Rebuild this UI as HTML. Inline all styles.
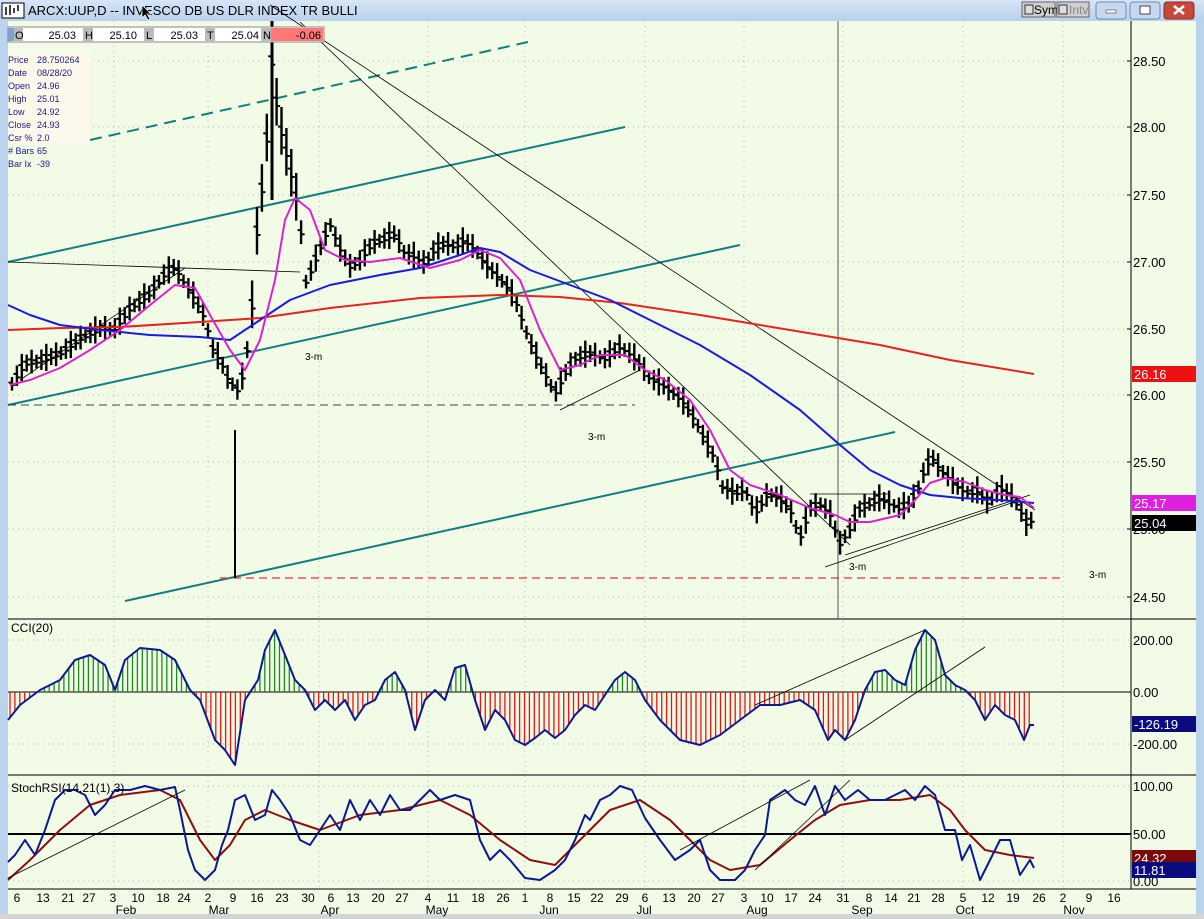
<!DOCTYPE html>
<html><head><meta charset="utf-8"><style>
html,body{margin:0;padding:0;width:1204px;height:919px;overflow:hidden;background:#f2fbe6;font-family:"Liberation Sans",sans-serif}
svg{position:absolute;left:0;top:0}
</style></head><body>
<svg id="s" width="1204" height="919" xmlns="http://www.w3.org/2000/svg" font-family="Liberation Sans, sans-serif">
<defs><linearGradient id="tb" x1="0" y1="0" x2="0" y2="1"><stop offset="0" stop-color="#d7e6f7"/><stop offset="1" stop-color="#b9d1ec"/></linearGradient></defs>
<rect x="0" y="0" width="1204" height="919" fill="#bcd3ee"/>
<rect x="0" y="0" width="1204" height="21" fill="url(#tb)"/>
<rect x="8" y="21" width="1188" height="894" fill="#f2fbe6"/>
<rect x="0" y="914" width="1204" height="5" fill="#d4d4d4"/>
<rect x="2" y="3" width="22" height="15" fill="#fff" stroke="#000"/>
<path d="M6 15V7M10 15V5M14 13V8M18 11V5" stroke="#000" stroke-width="1.5"/>
<text x="28" y="15" font-size="13" fill="#000">ARCX:UUP,D -- INVESCO DB US DLR INDEX TR BULLI</text>
<path d="M142 5l0 13 3-3 3 5 2-1-3-5 4 0z" fill="#000" stroke="#fff" stroke-width=".7"/>
<rect x="1022" y="2" width="33" height="15" fill="#d0d0d0" stroke="#666"/><text x="1034" y="14" font-size="12">Sym</text><rect x="1025" y="5" width="8" height="9" fill="#ddd" stroke="#333"/>
<rect x="1057" y="2" width="32" height="15" fill="#d0d0d0" stroke="#666"/><text x="1069" y="14" font-size="12" fill="#888">Intv</text><rect x="1059" y="5" width="8" height="9" fill="#ddd" stroke="#333"/>
<rect x="1096" y="2" width="30" height="17" rx="3" fill="#c6d8ef" stroke="#6f8bb0"/><rect x="1106" y="10" width="10" height="3" fill="#fff" stroke="#444" stroke-width=".6"/>
<rect x="1130" y="2" width="30" height="17" rx="3" fill="#c6d8ef" stroke="#6f8bb0"/><rect x="1140" y="6" width="10" height="8" fill="#fff" stroke="#444"/>
<rect x="1164" y="2" width="30" height="17" rx="3" fill="#c9463a" stroke="#8a2a22"/><path d="M1174 6l10 8M1184 6l-10 8" stroke="#fff" stroke-width="2.5"/>
<g id="g"></g>
</svg>
<script>
var g=document.getElementById('g'),h='';
function L(x1,y1,x2,y2,c,w,d){h+='<line x1="'+x1+'" y1="'+y1+'" x2="'+x2+'" y2="'+y2+'" stroke="'+c+'" stroke-width="'+(w||1)+'"'+(d?' stroke-dasharray="'+d+'"':'')+'/>';}
function P(pts,c,w){h+='<polyline fill="none" stroke="'+c+'" stroke-width="'+(w||1)+'" stroke-linejoin="round" points="'+pts.map(function(p){return p.join(',')}).join(' ')+'"/>';}
function T(x,y,t,s,c,a){h+='<text x="'+x+'" y="'+y+'" font-size="'+(s||12)+'" fill="'+(c||'#000')+'"'+(a?' text-anchor="'+a+'"':'')+'>'+t+'</text>';}
function interp(pts,x){for(var i=0;i<pts.length-1;i++){if(x>=pts[i][0]&&x<=pts[i+1][0]){var t=(x-pts[i][0])/(pts[i+1][0]-pts[i][0]);return pts[i][1]+t*(pts[i+1][1]-pts[i][1]);}}return pts[pts.length-1][1];}
var gx=[114,208,319,428,525,645,744,843,963,1063];
gx.forEach(function(x){L(x,21,x,889,'#b8b8b8',1,'1,4');});
[61,127,195,262,329,395,462,529,597,640,744,786,881].forEach(function(y){L(8,y,1131,y,'#b8b8b8',1,'1,4');});
L(8,619,1196,619,'#777',2);L(8,775,1196,775,'#777',2);L(1131,21,1131,889,'#000',1);L(8,889,1196,889,'#000',1);
L(8,692,1131,692,'#000',1);L(8,834,1131,834,'#000',2);
[['28.50',61],['28.00',127],['27.50',195],['27.00',262],['26.50',329],['26.00',395],['25.50',462],['25.00',529],['24.50',597]].forEach(function(a){L(1127,a[1],1131,a[1],'#000');T(1133,a[1]+5,a[0],13);});
[['200.00',640],['0.00',692],['-200.00',744]].forEach(function(a){T(1133,a[1]+5,a[0],13);});
[['100.00',786],['50.00',834],['0.00',881]].forEach(function(a){T(1133,a[1]+5,a[0],13);});
L(8,405,740,245,'#0f7f80',2);L(8,262,625,127,'#0f7f80',2);L(125,601,895,432,'#0f7f80',2);L(90,140,528,42,'#0f7f80',2,'12,7');
L(8,405,635,405,'#345',1,'8,5');L(220,578,1065,578,'#e33',1.3,'8,5');
L(270,5,1035,510,'#000',.8);L(300,22,850,545,'#000',.8);L(8,262,300,272,'#000',.8);
L(838,21,838,619,'#555',1);L(825,567,1020,500,'#000',.8);L(845,555,1030,495,'#000',.8);L(810,494,890,494,'#000',.8);
L(20,380,185,268,'#000',.8);L(560,410,640,370,'#000',.8);
var pr=[[12,385],[25,365],[40,362],[60,355],[80,340],[100,330],[115,330],[130,310],[150,295],[165,275],[175,268],[185,285],[195,300],[205,320],[213,350],[222,365],[228,380],[238,392],[245,370],[252,310],[258,220],[265,170],[272,60],[278,120],[285,150],[292,180],[300,220],[305,285],[312,270],[320,250],[330,225],[340,250],[350,268],[360,262],[372,245],[385,240],[395,235],[405,255],[415,258],[425,265],[435,250],[445,245],[455,248],[465,242],[475,250],[485,265],[495,275],[505,285],[515,300],[525,330],[535,355],[545,375],[555,395],[565,375],[575,360],[590,355],[605,360],[620,348],[630,355],[640,365],[650,380],[660,385],[672,393],[685,405],[697,425],[707,445],[715,460],[722,488],[735,495],[745,490],[755,515],[768,495],[780,500],[790,510],[800,540],[810,510],[820,505],[830,515],[840,545],[850,530],[860,510],[870,505],[880,500],[890,505],[900,510],[910,505],[918,490],[925,470],[932,458],[940,470],[950,480],[960,490],[970,495],[978,492],[988,505],[1000,490],[1010,495],[1020,510],[1026,525],[1034,520]];
for(var x=12,i=0;x<=1034;x+=4.9,i++){var c=interp(pr,x),r=8+(i*7%5)*2;if(x>250&&x<300)r=28;L(x,c-r,x,c+r*0.7,'#000',2.4);L(x,c,x+3.5,c,'#000',2);L(x-3.5,c-r*0.3,x,c-r*0.3,'#000',2);}
L(272,21,272,200,'#000',3);L(235,430,235,578,'#000',2);
P([[8,330],[60,328],[120,327],[200,322],[260,318],[330,308],[420,298],[500,295],[560,297],[620,303],[700,315],[760,325],[820,335],[880,345],[950,360],[1034,374]],'#e8221c',2);
P([[8,305],[30,315],[60,325],[100,330],[150,335],[200,337],[230,340],[260,320],[290,300],[330,285],[380,275],[420,268],[460,255],[480,248],[500,252],[530,270],[570,285],[610,300],[650,320],[700,345],[750,375],[800,410],[840,445],[870,470],[900,485],[930,495],[960,498],[1000,500],[1034,503]],'#1a1ae0',2);
P([[10,385],[30,380],[60,368],[90,350],[120,330],[150,305],[175,285],[195,288],[210,315],[230,350],[245,370],[260,340],[275,280],[285,220],[295,198],[310,210],[325,250],[345,260],[370,262],[400,258],[430,268],[460,260],[480,250],[500,258],[520,280],[540,330],[560,370],[580,365],[600,355],[625,355],[645,370],[665,380],[690,400],[710,430],[730,470],[750,485],[780,495],[810,508],[835,515],[850,522],[870,522],[900,515],[915,500],[930,483],[945,478],[965,482],[985,490],[1005,495],[1020,497],[1034,508]],'#e020d0',2);
T(305,360,'3-m',10);T(588,440,'3-m',10);T(849,570,'3-m',10);T(1089,578,'3-m',10);
var cc=[[8,720],[20,705],[40,690],[60,680],[75,660],[90,655],[105,665],[115,690],[125,660],[140,648],[160,650],[175,660],[190,690],[200,700],[215,740],[225,750],[235,765],[245,700],[258,680],[265,650],[275,630],[285,655],[295,680],[305,690],[315,710],[325,700],[335,710],[345,700],[355,720],[365,705],[375,700],[385,680],[395,672],[405,690],[415,730],[425,700],[435,690],[445,700],[455,668],[465,665],[475,700],[485,730],[495,710],[505,720],[515,740],[525,745],[535,738],[545,730],[555,738],[565,730],[575,715],[585,705],[595,710],[605,695],[615,680],[625,672],[635,680],[645,700],[660,720],[680,740],[700,745],[720,735],[740,720],[760,705],[780,705],[800,700],[815,710],[828,740],[835,730],[845,740],[855,720],[865,690],[875,672],[885,670],[895,680],[905,685],[915,650],[925,630],[935,640],[945,675],[955,685],[965,690],[975,700],[985,720],[995,705],[1005,715],[1015,720],[1024,740],[1030,725],[1034,725]];
for(var x=10;x<=1034;x+=4.9){var v=interp(cc,x);L(x,692,x,v,v<692?'#1a8a1a':'#ee1111',1.3);}
P(cc,'#0b1a90',2);
L(755,705,925,630,'#000',.8);L(845,740,985,647,'#000',.8);
T(11,632,'CCI(20)',12);
P([[8,880],[30,860],[60,830],[90,805],[120,795],[160,790],[180,800],[200,840],[215,860],[230,845],[245,820],[265,810],[290,820],[320,830],[360,815],[400,810],[440,800],[470,815],[500,840],[530,860],[555,865],[580,840],[610,810],[640,800],[670,820],[690,840],[710,860],[730,870],[760,865],[790,840],[815,820],[840,805],[870,800],[900,800],[930,795],[950,810],[965,830],[985,850],[1010,855],[1034,858]],'#8b1010',2);
P([[8,862],[15,855],[25,840],[35,855],[45,830],[55,800],[65,790],[75,790],[85,795],[95,815],[105,805],[115,790],[130,790],[145,786],[160,790],[175,787],[180,810],[188,850],[195,870],[205,880],[215,870],[222,845],[228,830],[235,800],[245,795],[255,820],[265,815],[272,790],[280,800],[290,815],[300,840],[310,845],[320,830],[330,815],[340,830],[350,800],[360,820],[370,800],[380,815],[390,795],[400,810],[410,810],[420,800],[430,790],[440,800],[455,795],[470,800],[480,840],[490,860],[500,850],[510,860],[525,878],[540,880],[555,870],[565,860],[575,840],[585,815],[590,820],[600,800],[610,795],[620,786],[632,790],[645,818],[660,840],[675,860],[690,850],[700,840],[710,870],[720,880],[735,880],[745,870],[755,850],[765,835],[770,800],[785,790],[795,800],[805,805],[815,786],[825,815],[835,786],[845,800],[858,790],[870,800],[885,800],[895,795],[905,790],[915,800],[925,786],[935,795],[945,830],[955,830],[962,860],[970,845],[980,880],[990,860],[1000,840],[1010,840],[1020,875],[1030,860],[1034,868]],'#0b1a90',2);
L(8,878,185,790,'#000',.8);L(680,850,810,780,'#000',.8);L(755,870,850,780,'#000',.8);
T(11,792,'StochRSI(14,21(1),3)',12);
var d=[['6',17],['13',43],['21',68],['27',89],['3',113],['10',138],['18',163],['24',184],['2',208],['9',233],['16',257],['23',282],['30',308],['6',331],['13',353],['20',378],['27',402],['4',428],['11',453],['18',478],['26',503],['1',525],['8',550],['15',574],['22',597],['29',622],['6',645],['13',669],['20',694],['27',718],['3',744],['10',767],['17',791],['24',815],['31',843],['8',869],['14',891],['21',914],['28',938],['5',963],['12',988],['19',1013],['26',1039],['2',1063],['9',1089],['16',1114]];
d.forEach(function(a){T(a[1],902,a[0],12,'#000','middle');});
[['Feb',126],['Mar',219],['Apr',330],['May',437],['Jun',549],['Jul',644],['Aug',757],['Sep',862],['Oct',965],['Nov',1074]].forEach(function(a){T(a[1],914,a[0],12,'#000','middle');});
function B(y,c,t,fc){h+='<rect x="1132" y="'+y+'" width="64" height="16" fill="'+c+'"/>';T(1134,y+13,t,13,fc||'#fff');}
B(366,'#ee1111','26.16');B(495,'#e020e0','25.17');B(515,'#000','25.04');B(716,'#0b0b80','-126.19');B(850,'#7a0a0a','24.32');B(862,'#0b0b80','11.81');
h+='<rect x="8" y="27" width="316" height="15" fill="#fff" stroke="#888"/>';
[['O',8,'25.03',76],['H',78,'25.10',137],['L',139,'25.03',198],['T',200,'25.04',259]].forEach(function(a){h+='<rect x="'+(a[1]+5)+'" y="28" width="10" height="13" fill="#bbb"/>';T(a[1]+7,39,a[0],11);T(a[3],39,a[2],11,'#000','end');});
h+='<rect x="8" y="28" width="6" height="13" fill="#7fa0c8"/>';
h+='<rect x="261" y="28" width="10" height="13" fill="#bbb"/>';T(263,39,'N',11);h+='<rect x="271" y="28" width="52" height="13" fill="#f77"/>';T(321,39,'-0.06',11,'#000','end');
h+='<rect x="8" y="52" width="82" height="92" fill="#fdf8ec"/>';
[['Price','28.750264'],['Date','08/28/20'],['Open','24.96'],['High','25.01'],['Low','24.92'],['Close','24.93'],['Csr %','2.0'],['# Bars','65'],['Bar Ix','-39']].forEach(function(a,i){T(8,63+i*13,a[0],9,'#1a1a80');T(37,63+i*13,a[1],9,'#1a1a80');});
g.innerHTML=h;
</script>
</body></html>
